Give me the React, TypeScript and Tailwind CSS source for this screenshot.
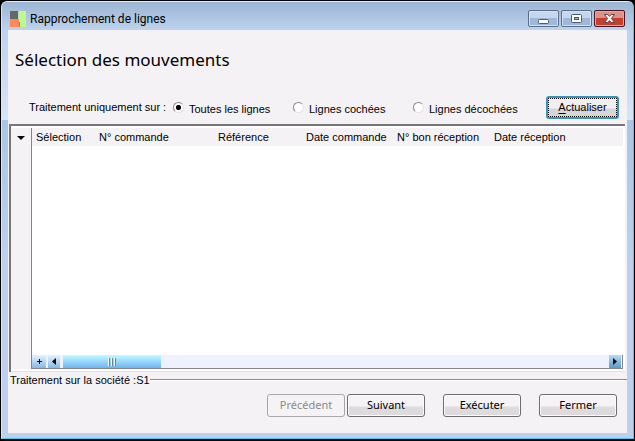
import { useState } from 'react';

const filters = [
  { id: 'all', label: 'Toutes les lignes', width: 'w-[120px]' },
  { id: 'checked', label: 'Lignes cochées', width: 'w-[120px]' },
  { id: 'unchecked', label: 'Lignes décochées', width: 'w-[120px]' },
];

const columns = [
  { label: 'Sélection', width: 'w-[63px]' },
  { label: 'N° commande', width: 'w-[119px]' },
  { label: 'Référence', width: 'w-[88px]' },
  { label: 'Date commande', width: 'w-[91px]' },
  { label: 'N° bon réception', width: 'w-[97px]' },
  { label: 'Date réception', width: 'w-auto' },
];

const buttonBase =
  'h-[23px] rounded-[3px] border border-[#706d72] bg-linear-to-b from-[#f5f3f5] from-50% to-[#dddbdd] to-60% text-black shadow-[inset_0_0_0_1px_#fbfafb]';

const TitleBar = () => {
  return (
    <header className="flex h-[28px] shrink-0 items-start justify-between bg-linear-to-b from-[#9bb5d3] to-[#bdd3ee] pr-2 pl-2">
      <div className="flex items-center gap-1 pt-2">
        <svg className="size-4" viewBox="0 0 16 16" shapeRendering="crispEdges" aria-hidden="true">
          <rect width="8" height="8" fill="#646866" />
          <rect y="8" width="9" height="8" fill="#fb8a56" />
          <rect x="8" width="1" height="8" fill="#bfd8c0" />
          <rect x="9" width="7" height="16" fill="#bffb8c" />
          <rect x="9" y="11" width="1" height="5" fill="#5d9a78" />
        </svg>
        <h1 className="pt-px font-[Roboto,'Noto_Sans',sans-serif] text-[12px] leading-4 text-black">
          Rapprochement de lignes
        </h1>
      </div>

      {/* Window controls */}
      <div className="flex gap-[2px] pt-2">
        <button
          type="button"
          aria-label="Réduire"
          className="flex h-[17px] w-[31px] items-center justify-center rounded-[2px] border border-[#566f91] bg-linear-to-b from-[#c4d7ec] from-50% to-[#9db9d7] to-50% shadow-[inset_0_0_0_1px_#d3e2f3]"
        >
          <svg className="h-[13px] w-[13px]" viewBox="0 0 13 13" aria-hidden="true">
            <rect x="1.5" y="7.5" width="10" height="4" rx="1" fill="#fff" stroke="#4f596a" />
          </svg>
        </button>
        <button
          type="button"
          aria-label="Agrandir"
          className="flex h-[17px] w-[31px] items-center justify-center rounded-[2px] border border-[#566f91] bg-linear-to-b from-[#c4d7ec] from-50% to-[#9db9d7] to-50% shadow-[inset_0_0_0_1px_#d3e2f3]"
        >
          <svg className="h-[13px] w-[13px]" viewBox="0 0 13 13" aria-hidden="true">
            <rect x="1.5" y="2.5" width="10" height="8" rx="1" fill="#fff" stroke="#4f596a" />
            <rect x="4.5" y="5.5" width="4" height="2" fill="#9db9d7" stroke="#4f596a" />
          </svg>
        </button>
        <button
          type="button"
          aria-label="Fermer la fenêtre"
          className="flex h-[17px] w-[31px] items-center justify-center rounded-[2px] border border-[#4a1520] bg-linear-to-b from-[#dc9287] from-50% to-[#c4402c] to-50% shadow-[inset_0_0_0_1px_#e5a79e]"
        >
          <svg className="h-[13px] w-[13px]" viewBox="0 0 13 13" aria-hidden="true">
            <path
              d="M1.5 2.5h3.3L6.5 4.4 8.2 2.5h3.3L8.4 6.5l3.1 4H8.2L6.5 8.6 4.8 10.5H1.5l3.1-4z"
              fill="#fff"
              stroke="#5a4450"
            />
          </svg>
        </button>
      </div>
    </header>
  );
};

const FilterBar = () => {
  const [selected, setSelected] = useState('all');

  return (
    <div className="flex items-center pr-2 pl-[21px]">
      <div role="radiogroup" aria-labelledby="filter-label" className="flex flex-1 items-center">
        <span id="filter-label" className="w-[144px]">
          Traitement uniquement sur :
        </span>
        {filters.map((filter) => (
          <label key={filter.id} className={`flex items-center gap-[5px] ${filter.width}`}>
            <input
              type="radio"
              name="filter"
              checked={selected === filter.id}
              onChange={() => setSelected(filter.id)}
              className="size-[11px] appearance-none rounded-full border border-t-[#88858b] border-r-[#e4e1e5] border-b-[#e4e1e5] border-l-[#88858b] bg-white checked:bg-radial checked:from-black checked:from-[2px] checked:to-white checked:to-[3px]"
            />
            <span className="pt-[3px] whitespace-nowrap">{filter.label}</span>
          </label>
        ))}
      </div>
      <button
        type="button"
        className="h-[23px] w-[73px] shrink-0 rounded-[3px] border-2 border-[#3d93b5] bg-linear-to-b from-[#f1eff1] from-50% to-[#d6d5d8] to-60% text-[11px] text-black"
      >
        <span className="flex h-full items-center justify-center border border-dotted border-black">
          <span className="underline underline-offset-2">A</span>ctualiser
        </span>
      </button>
    </div>
  );
};

const MovementsGrid = () => {
  return (
    <div className="mt-[5px] mr-[2px] ml-px flex flex-1 flex-col border-t-2 border-l-2 border-[#77767a] bg-white pt-[2px]">
      <div className="flex flex-1 pr-[2px]">
        <div className="flex w-5 shrink-0 justify-center bg-[#f5f2f6] pt-2">
          <svg className="h-1 w-2" viewBox="0 0 8 4" aria-hidden="true">
            <path d="M0 0h8L4 4z" fill="#000" />
          </svg>
        </div>
        <div className="flex flex-1 flex-col border-b border-l border-[#858488]">
          <table className="w-full table-fixed border-collapse">
            <thead>
              <tr className="h-[18px] bg-[#f5f2f6]">
                {columns.map((column) => (
                  <th
                    key={column.label}
                    className={`p-0 pl-1 text-left font-normal whitespace-nowrap ${column.width}`}
                  >
                    {column.label}
                  </th>
                ))}
              </tr>
            </thead>
            <tbody />
          </table>

          {/* Horizontal scrollbar */}
          <div className="mt-auto flex h-[13px] items-stretch border-r border-[#858488] bg-[#edf2fe]">
            <button
              type="button"
              aria-label="Ajouter"
              className="flex w-[14px] items-center justify-center bg-linear-to-b from-[#e4f3fe] to-[#84b9e9]"
            >
              <svg className="size-[7px]" viewBox="0 0 7 7" shapeRendering="crispEdges" aria-hidden="true">
                <path d="M3 1h1v2h2v1H4v2H3V4H1V3h2z" fill="#000" />
              </svg>
            </button>
            <button
              type="button"
              aria-label="Défiler à gauche"
              className="ml-[2px] flex w-3 items-center justify-center bg-linear-to-b from-[#e4f3fe] to-[#84b9e9]"
            >
              <svg className="h-[7px] w-1" viewBox="0 0 4 7" aria-hidden="true">
                <path d="M4 0v7L0 3.500z" fill="#000" />
              </svg>
            </button>
            <div className="ml-[3px] flex w-[98px] items-center justify-center gap-px bg-linear-to-b from-[#c2fbff] to-[#6cb5f4]">
              <span className="h-2 w-[2px] border-r border-[#5f86a8] bg-white" />
              <span className="h-2 w-[2px] border-r border-[#5f86a8] bg-white" />
              <span className="h-2 w-[2px] border-r border-[#5f86a8] bg-white" />
            </div>
            <button
              type="button"
              aria-label="Défiler à droite"
              className="mr-px ml-auto flex w-3 items-center justify-center bg-linear-to-b from-[#b5dcf6] to-[#5c9bc9]"
            >
              <svg className="h-[7px] w-1" viewBox="0 0 4 7" aria-hidden="true">
                <path d="M0 0v7l4-3.500z" fill="#000" />
              </svg>
            </button>
          </div>
        </div>
      </div>
      <div className="mt-[2px] h-px bg-[#e6dbe8]" />
    </div>
  );
};

const Footer = () => {
  return (
    <footer>
      <div className="flex items-center pl-[2px]">
        <span className="leading-4 whitespace-nowrap">Traitement sur la société :S1</span>
        <span className="h-[2px] flex-1 border-t border-b border-t-[#8f8d91] border-b-white" />
      </div>
      <div className="flex justify-end pt-[6px] pr-2 pb-4 font-['Noto_Sans',sans-serif]">
        <button
          type="button"
          disabled
          className="h-[23px] w-[78px] rounded-[3px] border border-[#a9a7aa] bg-[#f5f3f5] text-[#8b898c]"
        >
          Précédent
        </button>
        <button type="button" className={`ml-[2px] w-[78px] ${buttonBase}`}>
          Suivant
        </button>
        <button type="button" className={`ml-[18px] w-[78px] ${buttonBase}`}>
          Exécuter
        </button>
        <button type="button" className={`mr-[2px] ml-[18px] w-[78px] ${buttonBase}`}>
          Fermer
        </button>
      </div>
    </footer>
  );
};

const App = () => {
  return (
    <div className="flex min-h-screen flex-col bg-black p-px pb-[2px] font-['Liberation_Sans',Arial,sans-serif] text-[11px] text-black">
      <div className="flex flex-1 flex-col rounded-t-md border border-t-[#e3edf8] border-r-[#3fcdf0] border-b-[#3fcdf0] border-l-[#d9e8f8] bg-[linear-gradient(#bdd3ee_7%,#d6e5f7_27%,#a9c6e6_27%,#bdd0ee_60%)]">
        <div className="flex flex-1 flex-col overflow-hidden rounded-t-[5px]">
          <TitleBar />
          <main className="mx-[6px] mb-[5px] flex flex-1 flex-col bg-[#f5f2f6]">
            <h2 className="px-[7px] pt-[18px] pb-6 font-['Noto_Sans',sans-serif] text-[17px] leading-6">
              Sélection des mouvements
            </h2>
            <FilterBar />
            <MovementsGrid />
            <Footer />
          </main>
        </div>
      </div>
    </div>
  );
};

export default App;
